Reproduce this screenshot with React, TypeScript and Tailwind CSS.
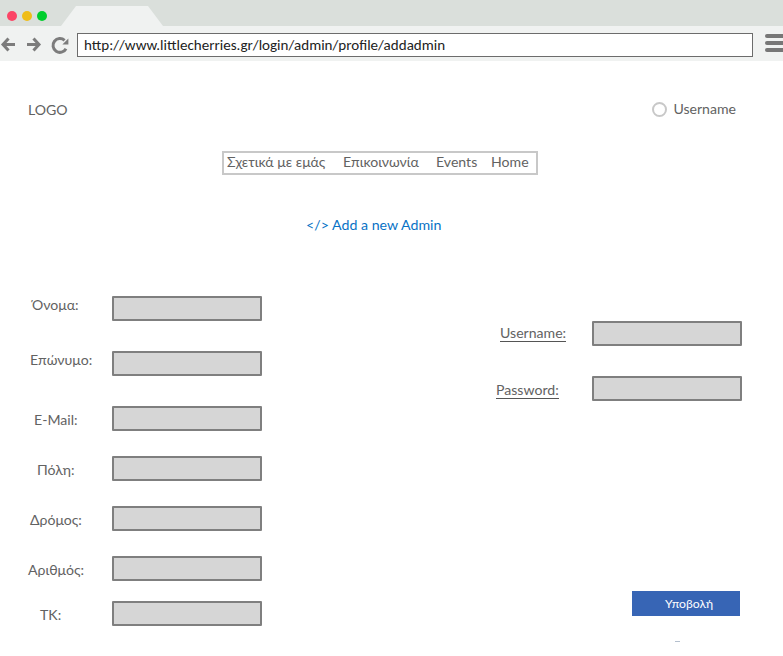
const profileFields = [
  { label: 'Όνομα:', row: 'h-[55px] pl-[32px]', text: '-mt-px' },
  { label: 'Επώνυμο:', row: 'h-[55px] pl-[30px]', text: '-mt-px' },
  { label: 'E-Mail:', row: 'h-[50px] pl-[34px]', text: 'mt-1' },
  { label: 'Πόλη:', row: 'h-[50px] pl-[37px]', text: 'mt-1' },
  { label: 'Δρόμος:', row: 'h-[50px] pl-[30px]', text: 'mt-1' },
  { label: 'Αριθμός:', row: 'h-[45px] pl-[28px]', text: 'mt-1' },
  { label: 'ΤΚ:', row: 'h-[25px] pl-[40px]', text: 'mt-1' },
];

function Field({ label }: { label: string }) {
  return (
    <input
      aria-label={label}
      className="block h-[25px] w-[150px] shrink-0 rounded-[1px] border-2 border-[#7f7f7f] bg-[#d6d6d6] px-1 outline-none"
    />
  );
}

function BrowserChrome() {
  return (
    <header>
      <div className="flex h-[26px] bg-[#dadfdb]">
        <div className="flex w-[61px] gap-[5px] pt-[10.5px] pl-[7px]">
          <span className="size-[10px] rounded-full bg-[#fb4566]" />
          <span className="size-[10px] rounded-full bg-[#efbd17]" />
          <span className="size-[10px] rounded-full bg-[#00ce2d]" />
        </div>
        <svg className="mt-[6px] h-5 w-[102px]" viewBox="0 0 102 20">
          <path d="M0 20 15 0H87L102 20Z" fill="#f0f2f1" />
        </svg>
      </div>
      <div className="flex h-[35px] bg-[#f0f2f1]">
        <svg className="h-[35px] w-[77px] shrink-0" viewBox="0 0 77 35" fill="none" stroke="#7c7c7c" strokeWidth="3">
          <path d="M15 18.5H3M8.5 12.5 3 18.5 8.5 24.5" />
          <path d="M27 18.5H39M33.5 12.5 39 18.5 33.5 24.5" />
          <path d="M64.6 14.4A6.9 6.9 0 1 0 66 22.7" />
          <path d="M68.4 12.4V18.4H62.4Z" fill="#7c7c7c" stroke="none" />
        </svg>
        <div className="mt-[7px] flex h-6 w-[676px] shrink-0 items-center border border-[#6c6c6c] bg-white pl-[6px] font-['Carlito','Lato',sans-serif] text-[15.05px] whitespace-nowrap text-[#222]">
          http://www.littlecherries.gr/login/admin/profile/addadmin
        </div>
        <div className="mt-2 ml-3 flex w-[18px] shrink-0 flex-col gap-[3px] overflow-hidden">
          <span className="h-1 w-6 rounded-full bg-[#777]" />
          <span className="h-1 w-6 rounded-full bg-[#777]" />
          <span className="h-1 w-6 rounded-full bg-[#777]" />
        </div>
      </div>
    </header>
  );
}

export default function App() {
  return (
    <div className="h-[656px] w-[783px] overflow-hidden bg-white font-['Lato','Carlito','Noto_Sans',sans-serif] text-[14.1px] leading-5 text-[#626262]">
      <BrowserChrome />
      <div className="flex h-[90px] justify-between pt-[38px] pr-[47px] pl-[28px]">
        <span className="mt-[1px]">LOGO</span>
        <div className="flex h-5 items-center gap-[6px]">
          <span className="size-[15px] rounded-full border-2 border-[#c8c8c8]" />
          <span>Username</span>
        </div>
      </div>
      <nav className="ml-[222px] flex h-6 w-[316px] border-2 border-[#c8c8c8] pl-[3px] whitespace-nowrap">
        <a className="-mt-px w-[116px]">Σχετικά με εμάς</a>
        <a className="-mt-px w-[93px]">Επικοινωνία</a>
        <a className="-mt-px w-[55px]">Events</a>
        <a className="-mt-px">Home</a>
      </nav>
      <h1 className="mt-10 ml-[306px] h-5 text-[14.2px] text-[#0872c6]">&lt;/&gt; Add a new Admin</h1>
      <form className="mt-[61px] flex h-[345px]">
        <div className="w-[495px]">
          {profileFields.map((field) => (
            <div key={field.label} className={`flex w-[262px] justify-between ${field.row}`}>
              <label className={`h-5 ${field.text}`}>{field.label}</label>
              <Field label={field.label} />
            </div>
          ))}
        </div>
        <div className="w-[247px] pt-[25px]">
          <div className="flex h-[55px] justify-between pl-[5px]">
            <label className="mt-[2px] h-[19px] border-b border-[#555]">Username:</label>
            <Field label="Username" />
          </div>
          <div className="flex h-[215px] justify-between pl-[1px]">
            <label className="mt-1 h-[19px] border-b border-[#555]">Password:</label>
            <Field label="Password" />
          </div>
          <button type="button" className="ml-[137px] block h-[25px] w-[108px] bg-[#3765b5] pl-[6px] text-[12.2px] text-white">
            Υποβολή
          </button>
          <span className="mt-[25px] ml-[180px] block h-px w-[5px] bg-[#b5c0ce]" />
        </div>
      </form>
    </div>
  );
}
